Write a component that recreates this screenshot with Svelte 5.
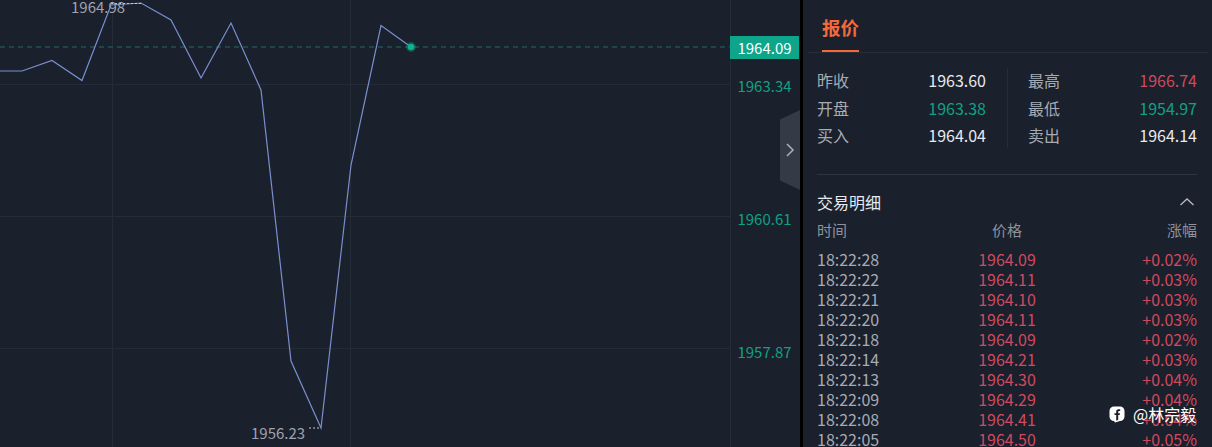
<script>
  const points = [[0,71],[22,71],[52,60.5],[82,80.5],[111,5],[141,3],[171,20],[201,78],[231,23],[261,90],[291,361],[321,428],[351,165],[381,25.5],[411,47]];
  const line = points.map((p) => p.join(',')).join(' ');

  const axis = [
    { y: 86, text: '1963.34' },
    { y: 219, text: '1960.61' },
    { y: 352, text: '1957.87' }
  ];

  const stats = [
    [
      { label: '昨收', value: '1963.60', tone: '' },
      { label: '开盘', value: '1963.38', tone: 'down' },
      { label: '买入', value: '1964.04', tone: '' }
    ],
    [
      { label: '最高', value: '1966.74', tone: 'up' },
      { label: '最低', value: '1954.97', tone: 'down' },
      { label: '卖出', value: '1964.14', tone: '' }
    ]
  ];

  const trades = [
    ['18:22:28', '1964.09', '+0.02%'],
    ['18:22:22', '1964.11', '+0.03%'],
    ['18:22:21', '1964.10', '+0.03%'],
    ['18:22:20', '1964.11', '+0.03%'],
    ['18:22:18', '1964.09', '+0.02%'],
    ['18:22:14', '1964.21', '+0.03%'],
    ['18:22:13', '1964.30', '+0.04%'],
    ['18:22:09', '1964.29', '+0.04%'],
    ['18:22:08', '1964.41', '+0.04%'],
    ['18:22:05', '1964.50', '+0.05%']
  ];
</script>

<div class="page">
  <div class="chart">
    <svg class="plot" width="800" height="447" viewBox="0 0 800 447">
      <g class="grid">
        <line x1="0" y1="84.5" x2="731" y2="84.5" />
        <line x1="0" y1="216.5" x2="731" y2="216.5" />
        <line x1="0" y1="348.5" x2="731" y2="348.5" />
        <line x1="112.5" y1="0" x2="112.5" y2="447" />
        <line x1="350.5" y1="0" x2="350.5" y2="447" />
        <line x1="730.5" y1="0" x2="730.5" y2="447" />
      </g>
      <line class="last" x1="0" y1="47" x2="730" y2="47" />
      <polyline class="price" points={line} />
      <line class="tick" x1="111" y1="3.5" x2="141" y2="3.5" />
      <line class="tick" x1="309" y1="428" x2="321" y2="428" />
      <circle class="glow" cx="411" cy="47" r="5" />
      <circle class="dot" cx="411" cy="47" r="3.2" />
    </svg>

    <span class="extreme hi">1964.98</span>
    <span class="extreme lo">1956.23</span>

    <span class="badge">1964.09</span>
    {#each axis as a}
      <span class="axis" style="top: {a.y}px">{a.text}</span>
    {/each}

    <div class="toggle">
      <svg width="10" height="16" viewBox="0 0 10 16">
        <path d="M2 2 L8 8 L2 14" fill="none" stroke="#a6abb5" stroke-width="1.6" />
      </svg>
    </div>
  </div>

  <div class="panel">
    <div class="tabs">
      <span class="tab">报价</span>
    </div>

    <div class="stats">
      {#each stats as col, i}
        <div class="col" class:second={i === 1}>
          {#each col as s}
            <div class="stat">
              <span class="label">{s.label}</span>
              <span class="value {s.tone}">{s.value}</span>
            </div>
          {/each}
        </div>
      {/each}
    </div>

    <div class="detail">
      <div class="detail-head">
        <span>交易明细</span>
        <svg width="16" height="10" viewBox="0 0 16 10">
          <path d="M1.5 8 L8 2 L14.5 8" fill="none" stroke="#b4b8c0" stroke-width="1.3" />
        </svg>
      </div>
      <div class="row head">
        <span>时间</span>
        <span>价格</span>
        <span>涨幅</span>
      </div>
      <div class="rows">
        {#each trades as t}
          <div class="row">
            <span class="time">{t[0]}</span>
            <span class="up">{t[1]}</span>
            <span class="up">{t[2]}</span>
          </div>
        {/each}
      </div>
    </div>
  </div>

  <div class="watermark">
    <svg width="16" height="17" viewBox="0 0 16 17">
      <path d="M5 0.5 H11 A4.5 4.5 0 0 1 15.5 5 V10.5 A4.5 4.5 0 0 1 11 15 L6 16.5 L5 15 A4.5 4.5 0 0 1 0.5 10.5 V5 A4.5 4.5 0 0 1 5 0.5 Z" fill="#fff" />
      <path d="M7.2 14.5 V9 H5.5 V7.2 H7.2 V5.6 C7.2 4.1 8.2 3.3 9.6 3.3 H11.2 V5 H10.2 C9.5 5 9.2 5.3 9.2 5.9 V7.2 H11 L10.7 9 H9.2 V14 Z" fill="#1a202c" />
    </svg>
    <span>@林宗毅</span>
  </div>
</div>

<style>
  :global(body) {
    margin: 0;
    background: #1a202c;
  }

  .page {
    position: relative;
    display: flex;
    width: 1212px;
    height: 447px;
    overflow: hidden;
    background: #1a202c;
    font-family: "Noto Sans CJK SC", "Noto Sans", sans-serif;
    font-size: 16px;
    color: #e8eaee;
  }

  .chart {
    position: relative;
    flex: 0 0 800px;
    height: 447px;
    border-right: 3px solid #000;
  }

  .plot {
    display: block;
  }

  .grid line {
    stroke: #252b37;
    stroke-width: 1;
  }

  .last {
    stroke: #1d6e68;
    stroke-width: 1;
    stroke-dasharray: 5 4;
  }

  .price {
    fill: none;
    stroke: #7a8fd0;
    stroke-width: 1.2;
  }

  .tick {
    stroke: #c4c8d2;
    stroke-width: 1;
    stroke-dasharray: 2 2;
  }

  .glow {
    fill: rgba(14, 178, 140, 0.35);
  }

  .dot {
    fill: #0eb28c;
  }

  .extreme {
    position: absolute;
    color: #9ea3ad;
    font-size: 15px;
    line-height: 18px;
  }

  .hi {
    left: 71px;
    top: -2px;
  }

  .lo {
    left: 251px;
    top: 424px;
  }

  .badge {
    position: absolute;
    left: 730px;
    top: 36px;
    width: 69px;
    height: 23px;
    background: #0ea58a;
    color: #fff;
    font-size: 15px;
    line-height: 24px;
    text-align: center;
  }

  .axis {
    position: absolute;
    left: 730px;
    width: 69px;
    margin-top: -9px;
    color: #10a085;
    font-size: 15px;
    line-height: 18px;
    text-align: center;
  }

  .toggle {
    position: absolute;
    left: 780px;
    top: 110px;
    width: 20px;
    height: 80px;
    display: flex;
    align-items: center;
    justify-content: center;
    background: #343a46;
    clip-path: polygon(0 12%, 100% 0, 100% 100%, 0 88%);
  }

  .panel {
    flex: 1;
    min-width: 0;
    display: flex;
    flex-direction: column;
    padding: 0 4px 0 5px;
  }

  .tabs {
    height: 52px;
    padding-left: 14px;
    border-bottom: 1px solid #262c38;
    display: flex;
  }

  .tab {
    height: 52px;
    box-sizing: border-box;
    padding-top: 14px;
    border-bottom: 2px solid #f2693c;
    color: #f2693c;
    font-size: 18.5px;
    font-weight: 700;
    line-height: 26px;
  }

  .stats {
    display: flex;
    margin: 0 11px 0 9px;
    padding: 15px 0 26px;
    border-bottom: 1px solid #2e3440;
  }

  .col {
    flex: 0 0 190px;
    height: 80px;
    display: flex;
    flex-direction: column;
    padding-right: 21px;
    box-sizing: border-box;
  }

  .col.second {
    padding-left: 20px;
    padding-right: 0;
    border-left: 1px solid #262c38;
  }

  .stat {
    flex: none;
    display: flex;
    justify-content: space-between;
    height: 27.5px;
    line-height: 24px;
  }

  .label {
    color: #a6abb5;
  }

  .value {
    color: #e8eaee;
  }

  .down {
    color: #10a085;
  }

  .up {
    color: #cf4a5e;
  }

  .detail {
    margin: 0 11px 0 9px;
  }

  .detail-head {
    display: flex;
    align-items: center;
    justify-content: space-between;
    height: 24px;
    margin-top: 15px;
    color: #e8eaee;
  }

  .detail-head svg {
    margin-right: 2px;
  }

  .row {
    display: grid;
    grid-template-columns: 1fr 1fr 1fr;
    height: 20px;
    line-height: 20px;
    white-space: nowrap;
  }

  .row span:nth-child(2) {
    text-align: center;
  }

  .row span:nth-child(3) {
    text-align: right;
  }

  .row.head {
    height: 22px;
    line-height: 22px;
    margin-top: 5px;
    color: #8d929c;
    font-size: 15px;
  }

  .rows {
    margin-top: 8px;
  }

  .time {
    color: #a6abb5;
  }

  .watermark {
    position: absolute;
    left: 1109px;
    top: 404px;
    display: flex;
    align-items: center;
    gap: 8px;
    color: #fff;
    font-size: 16px;
    line-height: 20px;
  }
</style>
